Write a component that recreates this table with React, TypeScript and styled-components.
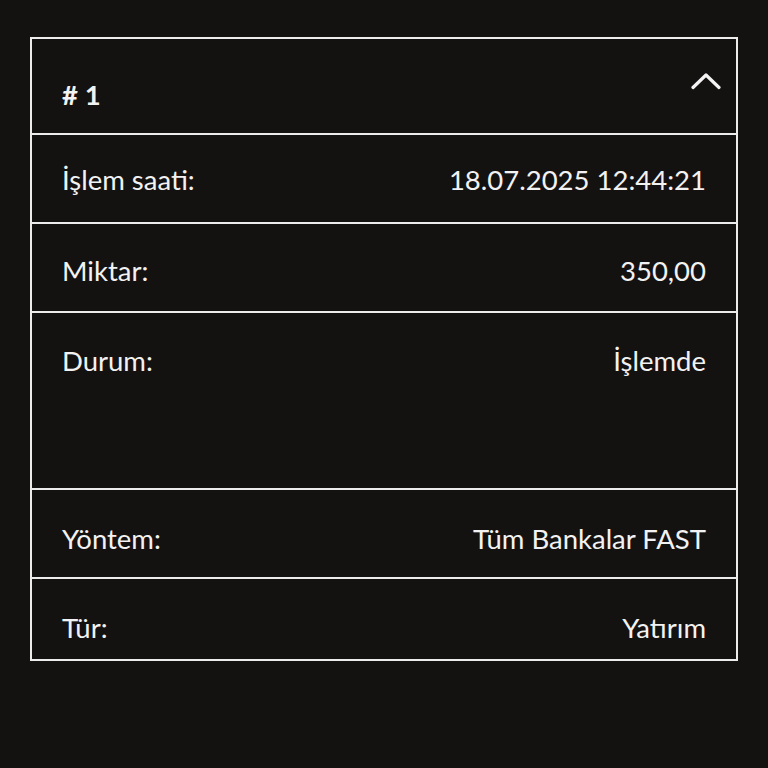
import React from "react";
import styled, { createGlobalStyle } from "styled-components";

const Global = createGlobalStyle`
  html, body { margin: 0; padding: 0; background: #141111; }
  body { font-family: Lato, "Open Sans", sans-serif; color: #f2f2f2; }
`;

const Page = styled.div`
  min-height: 768px;
  padding: 37px 30px 0 30px;
  box-sizing: border-box;
`;

const Card = styled.div`
  width: 708px;
  border: 2px solid #ececec;
  box-sizing: border-box;
  display: flex;
  flex-direction: column;
`;

const Header = styled.div`
  display: flex;
  justify-content: space-between;
  align-items: flex-start;
  padding: 33px 15px 23px 30px;
`;

const Title = styled.div`
  margin-top: 8px;
  font-weight: 700;
  font-size: 27.5px;
  line-height: 30px;
`;

const Row = styled.div<{ $top: number; $bottom: number; $minH?: number }>`
  display: flex;
  justify-content: space-between;
  align-items: flex-start;
  border-top: 2px solid #ececec;
  padding: ${(p) => p.$top}px 30px ${(p) => p.$bottom}px 30px;
  min-height: ${(p) => p.$minH ?? 0}px;
  font-size: 27.5px;
  line-height: 30px;
`;

const Label = styled.span``;
const Value = styled.span`
  text-align: right;
`;

const Chevron = () => (
  <svg width="30" height="18" viewBox="0 0 30 18" fill="none">
    <path d="M2 15.5 L15 3 L28 15.5" stroke="#f4f4f4" strokeWidth="3.2" strokeLinecap="round" strokeLinejoin="round" />
  </svg>
);

const rows = [
  { label: "İşlem saati:", value: "18.07.2025 12:44:21", top: 30, bottom: 27 },
  { label: "Miktar:", value: "350,00", top: 32, bottom: 25 },
  { label: "Durum:", value: "İşlemde", top: 33, bottom: 24, minH: 118 },
  { label: "Yöntem:", value: "Tüm Bankalar FAST", top: 34, bottom: 23 },
  { label: "Tür:", value: "Yatırım", top: 34, bottom: 16 },
];

export default function App() {
  return (
    <>
      <Global />
      <Page>
        <Card>
          <Header>
            <Title># 1</Title>
            <Chevron />
          </Header>
          {rows.map((r) => (
            <Row key={r.label} $top={r.top} $bottom={r.bottom} $minH={r.minH}>
              <Label>{r.label}</Label>
              <Value>{r.value}</Value>
            </Row>
          ))}
        </Card>
      </Page>
    </>
  );
}
